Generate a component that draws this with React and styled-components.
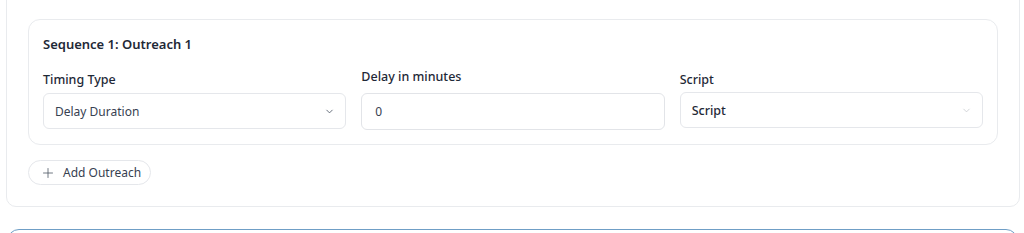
import React, { useState } from 'react';
import styled, { createGlobalStyle } from 'styled-components';

const GlobalStyle = createGlobalStyle`
  body {
    margin: 0;
    background: #ffffff;
    font-family: 'Noto Sans', 'Open Sans', sans-serif;
    color: #1f2937;
  }
  * {
    box-sizing: border-box;
  }
`;

const Chevron = ({ color }) => (
  <svg width="11" height="11" viewBox="0 0 24 24" fill="none" stroke={color} strokeWidth="1.8" strokeLinecap="round" strokeLinejoin="round">
    <path d="m6 9 6 6 6-6" />
  </svg>
);

const Plus = () => (
  <svg width="12" height="12" viewBox="0 0 24 24" fill="none" stroke="#4b5563" strokeWidth="1.6" strokeLinecap="round">
    <path d="M12 3v18M3 12h18" />
  </svg>
);

const App = () => {
  const [delay, setDelay] = useState('0');

  const fields = [
    { id: 'timing', label: 'Timing Type', kind: 'select', value: 'Delay Duration', gap: 4 },
    { id: 'delay', label: 'Delay in minutes', kind: 'input', gap: 7 },
    { id: 'script', label: 'Script', kind: 'select', value: 'Script', gap: 3, strong: true }
  ];

  return (
    <Page>
      <GlobalStyle />
      <SequenceCard>
        <OutreachCard>
          <OutreachTitle>Sequence 1: Outreach 1</OutreachTitle>
          <FieldGrid>
            {fields.map((field) => (
              <Field key={field.id}>
                <Label $gap={field.gap}>{field.label}</Label>
                {field.kind === 'input' ? (
                  <TextInput value={delay} onChange={(e) => setDelay(e.target.value)} />
                ) : (
                  <SelectBox $strong={field.strong}>
                    <span>{field.value}</span>
                    <Chevron color={field.strong ? '#c9ccd1' : '#4b5563'} />
                  </SelectBox>
                )}
              </Field>
            ))}
          </FieldGrid>
        </OutreachCard>
        <AddButton>
          <Plus />
          Add Outreach
        </AddButton>
      </SequenceCard>
      <NextCard />
    </Page>
  );
};

export default App;

const Page = styled.div`
  padding: 0 4px 0 6px;
  height: 233px;
  overflow: hidden;
`;

const SequenceCard = styled.div`
  margin-top: -12px;
  border: 1px solid #e9ebee;
  border-radius: 10px;
  padding: 30px 21px 21px 21px;
  background: #ffffff;
`;

const OutreachCard = styled.div`
  border: 1px solid #e9ebee;
  border-radius: 12px;
  padding: 14px 14px 15px 14px;
`;

const OutreachTitle = styled.h3`
  margin: 0 0 14px 0;
  font-size: 13px;
  line-height: 20px;
  font-weight: 600;
  color: #1f2937;
`;

const FieldGrid = styled.div`
  display: grid;
  grid-template-columns: repeat(3, 1fr);
  gap: 15px;
  align-items: end;
`;

const Field = styled.div`
  display: flex;
  flex-direction: column;
`;

const Label = styled.label`
  font-size: 12.5px;
  line-height: 18px;
  font-weight: 500;
  color: #1f2937;
  margin-bottom: ${(p) => p.$gap}px;
`;

const SelectBox = styled.div`
  height: 36px;
  border: 1px solid #e5e7eb;
  border-radius: 6px;
  display: flex;
  align-items: center;
  justify-content: space-between;
  padding: 0 10px 0 11px;
  font-size: ${(p) => (p.$strong ? '12.5px' : '12px')};
  font-weight: ${(p) => (p.$strong ? 500 : 400)};
  color: ${(p) => (p.$strong ? '#1f2937' : '#374151')};
  margin-bottom: ${(p) => (p.$strong ? '1px' : '0')};
`;

const TextInput = styled.input`
  height: 37px;
  border: 1px solid #e2e4e8;
  border-radius: 6px;
  padding: 0 13px;
  font-family: inherit;
  font-size: 12px;
  color: #374151;
  outline: none;
  width: 100%;
  margin-bottom: -1px;
`;

const AddButton = styled.button`
  margin-top: 15px;
  height: 25px;
  width: 123px;
  display: flex;
  align-items: center;
  gap: 9px;
  padding: 0 0 0 13px;
  border: 1px solid #e5e7eb;
  border-radius: 999px;
  background: #ffffff;
  font-family: inherit;
  font-size: 12px;
  color: #374151;
  cursor: pointer;
`;

const NextCard = styled.div`
  margin-top: 22px;
  margin-left: 1px;
  margin-right: 2px;
  height: 40px;
  border: 1px solid #6f9ec6;
  border-radius: 12px;
`;
